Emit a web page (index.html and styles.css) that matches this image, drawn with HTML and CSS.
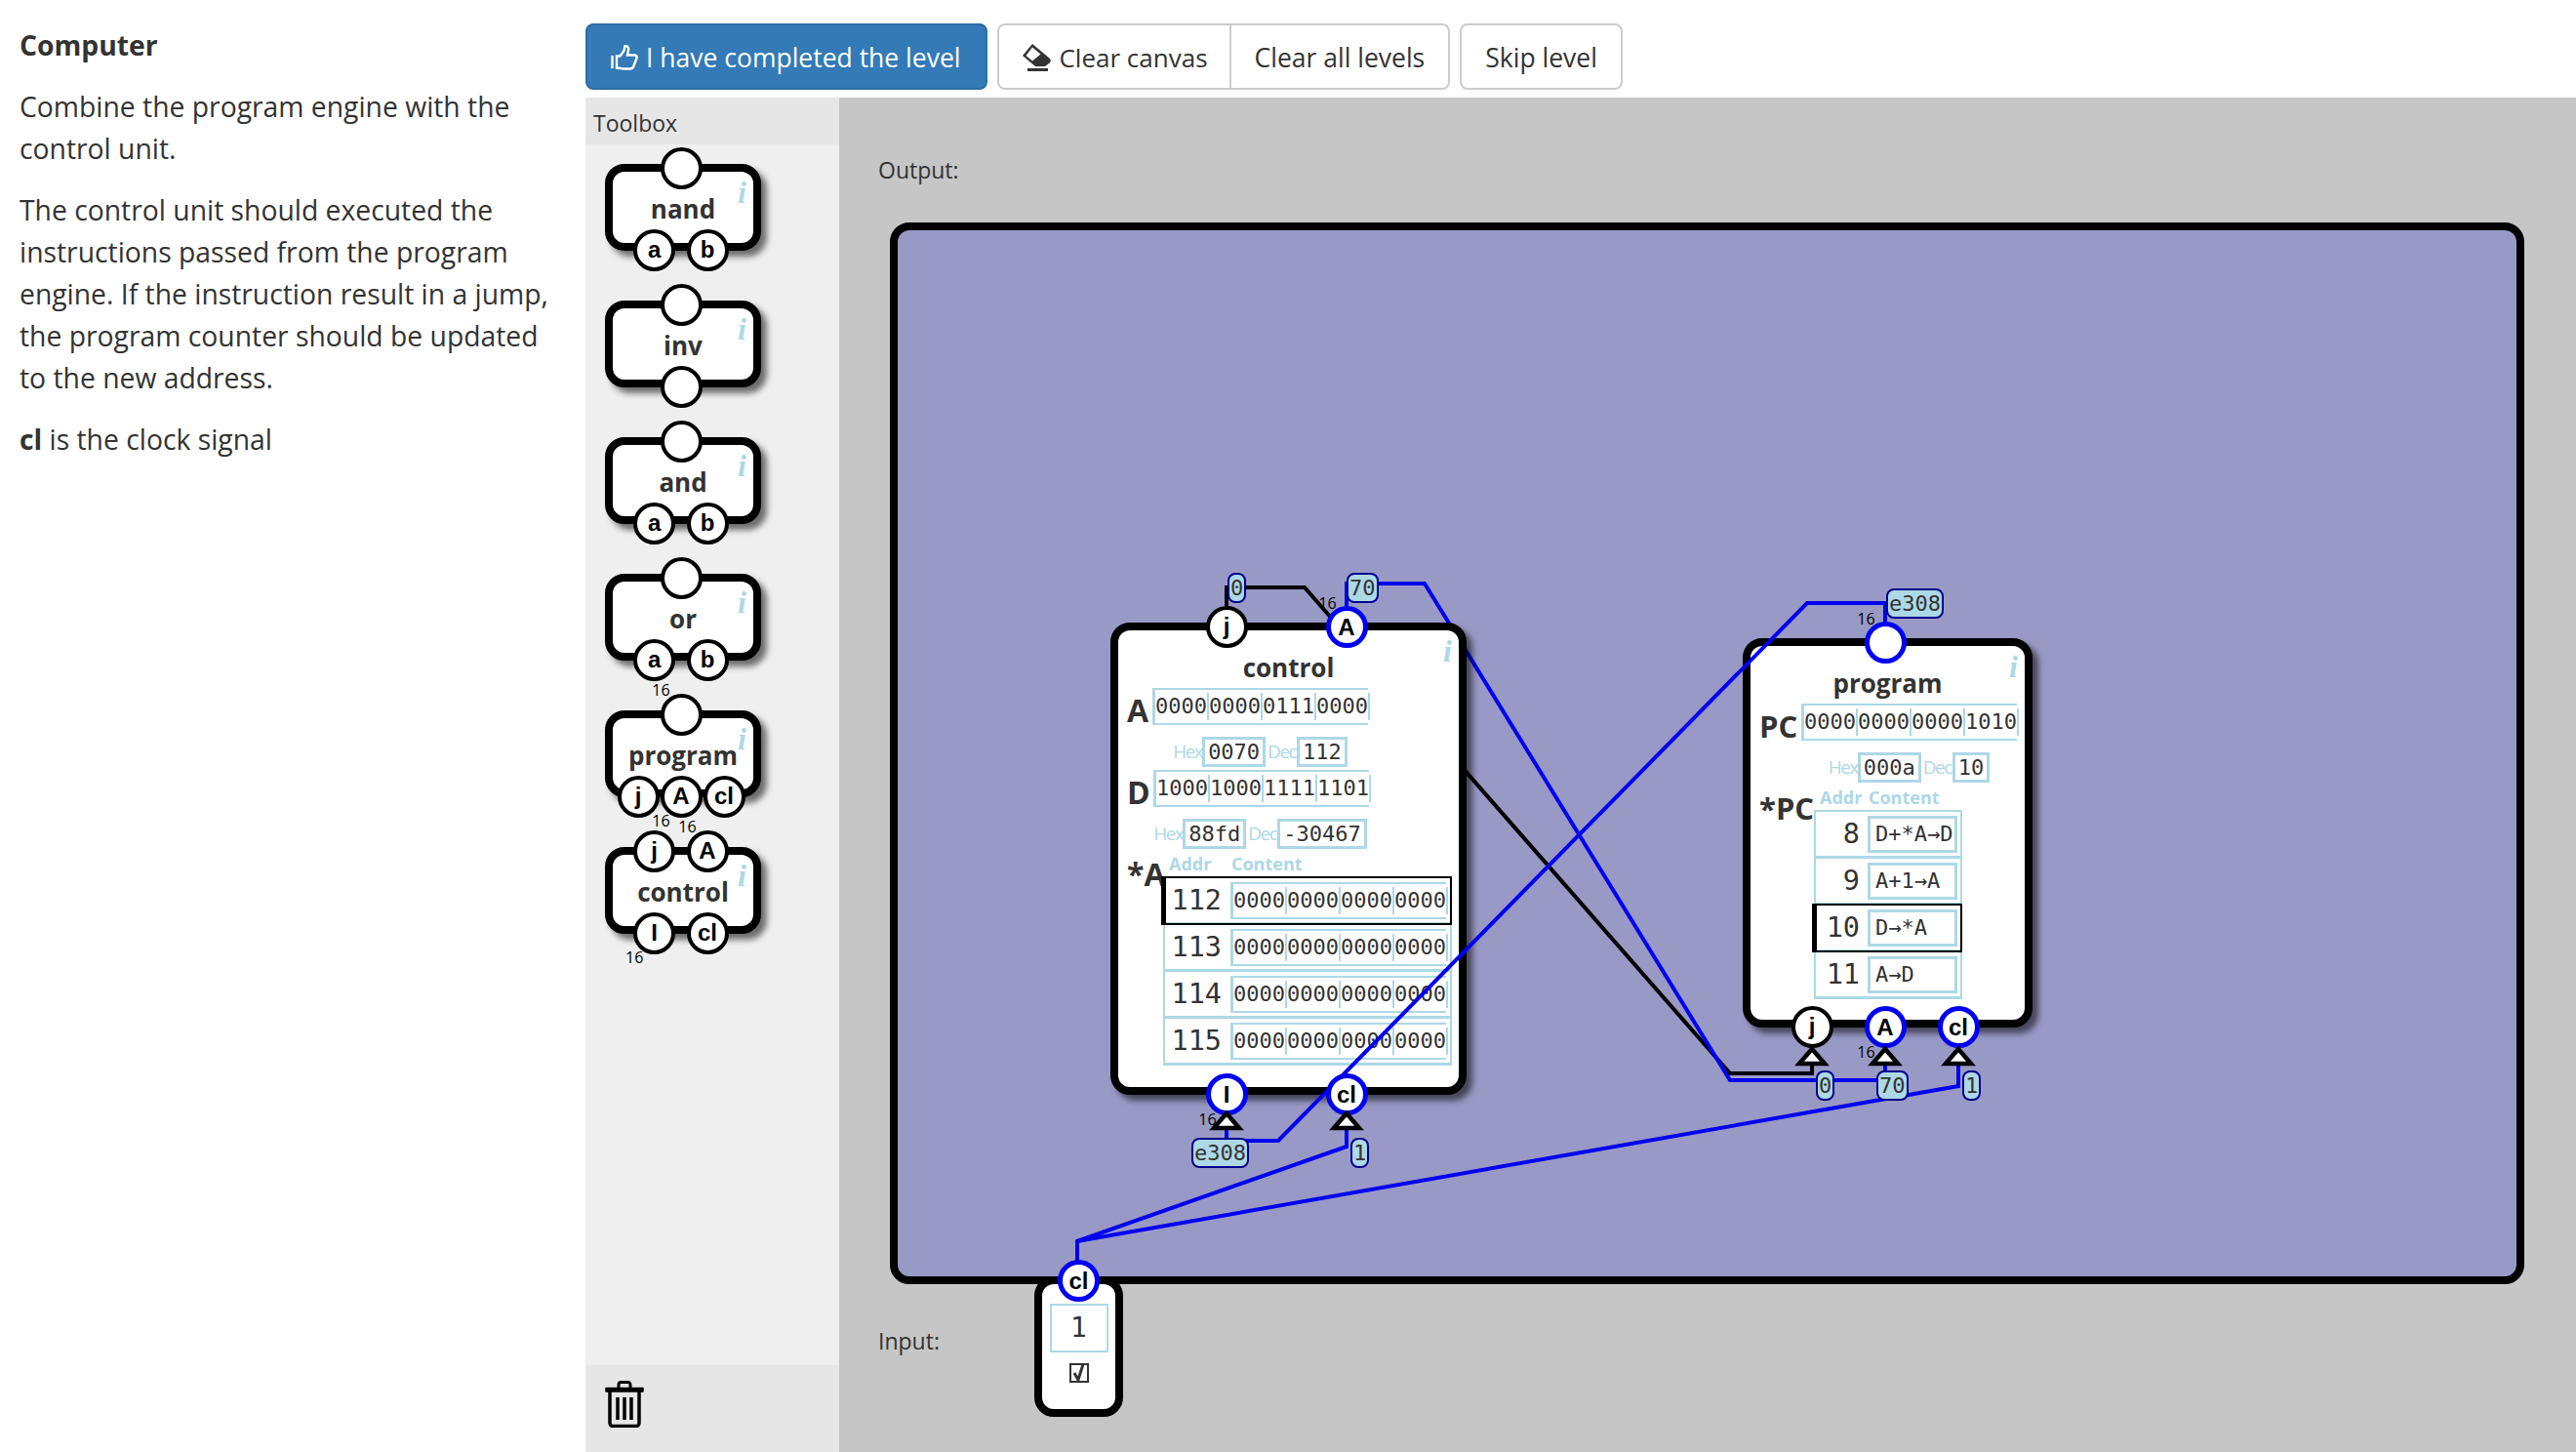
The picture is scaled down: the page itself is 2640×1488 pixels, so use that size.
FILE: index.html
```html
<!DOCTYPE html>
<html lang="en">
<head>
    <meta charset="UTF-8">
    <title>Computer</title>
    <link rel="stylesheet" href="styles.css">
</head>
<body>

    <!-- Level text -->
    <div class="sidebar">
        <h3>Computer</h3>
        <p>Combine the program engine with the control unit.</p>
        <p>The control unit should executed the instructions passed from the program engine. If the instruction result in a jump, the program counter should be updated to the new address.</p>
        <p><b>cl</b> is the clock signal</p>
    </div>

    <div class="main">
        <div class="toolbar">
            <button class="btn btn-primary">
                <svg class="btn-icon" width="28" height="27" viewBox="0 0 28 27" fill="none" stroke="#fff" stroke-width="2.4"><path d="M1.5 11v13"/><path d="M6 11.5h3.5l4-5.5 1-5c3 0 4 2 3.5 4.5l-1 5h7.5c2 0 2.5 2 1.800 3.500l-3 8c-.5 1.500-1.500 2.500-3.500 2.500h-7c-2 0-3-1-6.800-1z"/></svg>
                I have completed the level
            </button>
            <div class="btn-group">
                <button class="btn btn-canvas">
                    <svg class="btn-icon" width="30" height="28" viewBox="0 0 30 28"><path d="M10 0l18 15q2 3-1 5l-4 3h-10l-13-11z" fill="#333"/><path d="M10 3.500l-6.500 8.500 6.500 5.500 8.500-7z" fill="#fff"/><path d="M5 25h21v3h-21z" fill="#333"/></svg>
                    Clear canvas
                </button>
                <button class="btn">Clear all levels</button>
            </div>
            <button class="btn">Skip level</button>
        </div>

        <div class="workspace">
            <!-- Components that can be dragged to the canvas -->
            <div class="toolbox">
                <div class="toolbox-head">Toolbox</div>
                <div class="toolbox-list">
                    <div class="node tool">
                        <span class="info">i</span>
                        <div class="node-title">nand</div>
                        <span class="conn conn-top t-mid"></span>
                        <span class="conn conn-bottom t-left">a</span>
                        <span class="conn conn-bottom t-right">b</span>
                    </div>
                    <div class="node tool">
                        <span class="info">i</span>
                        <div class="node-title">inv</div>
                        <span class="conn conn-top t-mid"></span>
                        <span class="conn conn-bottom t-mid"></span>
                    </div>
                    <div class="node tool">
                        <span class="info">i</span>
                        <div class="node-title">and</div>
                        <span class="conn conn-top t-mid"></span>
                        <span class="conn conn-bottom t-left">a</span>
                        <span class="conn conn-bottom t-right">b</span>
                    </div>
                    <div class="node tool">
                        <span class="info">i</span>
                        <div class="node-title">or</div>
                        <span class="conn conn-top t-mid"></span>
                        <span class="conn conn-bottom t-left">a</span>
                        <span class="conn conn-bottom t-right">b</span>
                    </div>
                    <div class="node tool">
                        <span class="info">i</span>
                        <div class="node-title">program</div>
                        <span class="conn conn-top t-mid"><span class="bus-width">16</span></span>
                        <span class="conn conn-bottom t-first">j</span>
                        <span class="conn conn-bottom t-mid">A<span class="bus-width">16</span></span>
                        <span class="conn conn-bottom t-last">cl</span>
                    </div>
                    <div class="node tool">
                        <span class="info">i</span>
                        <div class="node-title">control</div>
                        <span class="conn conn-top t-left">j</span>
                        <span class="conn conn-top t-right">A<span class="bus-width">16</span></span>
                        <span class="conn conn-bottom t-left">I<span class="bus-width">16</span></span>
                        <span class="conn conn-bottom t-right">cl</span>
                    </div>
                </div>
                <div class="toolbox-foot">
                    <svg width="40" height="48" viewBox="0 0 40 48"><path d="M14 7V4a2.500 2.500 0 0 1 2.500-2.500h7A2.500 2.500 0 0 1 26 4v3" fill="none" stroke="#000" stroke-width="3"/><path d="M1 7.500h38v3.500h-38z" fill="#000" stroke="#000" stroke-width="1.500" stroke-linejoin="round"/><path d="M5 11v32.500a3 3 0 0 0 3 3h24a3 3 0 0 0 3-3V11" fill="none" stroke="#000" stroke-width="3.500"/><path d="M13 17v23M20 17v23M27 17v23" stroke="#000" stroke-width="3.500"/></svg>
                </div>
            </div>

            <!-- Wires use page coordinates through the viewBox -->
            <div class="stage">
                <div class="stage-label">Output:</div>
                <div class="canvas"></div>
                <div class="stage-label stage-label-input">Input:</div>

                <svg class="wires" viewBox="860 100 1780 1388">
                    <path class="wire" d="M1257 622V602H1337L1773 1100H1857V1080"/>
                    <path class="wire on" d="M1380 622V598H1460L1773 1107H1932V1085"/>
                </svg>

                <div class="node node-control">
                    <span class="info">i</span>
                    <div class="node-title">control</div>
                    <div class="reg"><span class="reg-name">A</span><div class="bits"><span>0000</span><span>0000</span><span>0111</span><span>0000</span></div></div>
                    <div class="conv"><span class="conv-name">Hex</span><span class="conv-val">0070</span><span class="conv-name">Dec</span><span class="conv-val">112</span></div>
                    <div class="reg reg-next"><span class="reg-name name-d">D</span><div class="bits"><span>1000</span><span>1000</span><span>1111</span><span>1101</span></div></div>
                    <div class="conv"><span class="conv-name">Hex</span><span class="conv-val">88fd</span><span class="conv-name">Dec</span><span class="conv-val">-30467</span></div>
                    <div class="mem">
                        <span class="reg-name mem-name">*A</span>
                        <div>
                            <div class="mem-head"><span class="head-addr">Addr</span><span>Content</span></div>
                            <div class="mem-table">
                                <div class="mem-row current"><span class="addr">112</span><div class="bits"><span>0000</span><span>0000</span><span>0000</span><span>0000</span></div></div>
                                <div class="mem-row"><span class="addr">113</span><div class="bits"><span>0000</span><span>0000</span><span>0000</span><span>0000</span></div></div>
                                <div class="mem-row"><span class="addr">114</span><div class="bits"><span>0000</span><span>0000</span><span>0000</span><span>0000</span></div></div>
                                <div class="mem-row"><span class="addr">115</span><div class="bits"><span>0000</span><span>0000</span><span>0000</span><span>0000</span></div></div>
                            </div>
                        </div>
                    </div>
                    <span class="conn conn-top c-first">j</span>
                    <span class="conn conn-top c-second on">A<span class="bus-width">16</span></span>
                    <span class="conn conn-bottom c-first on">I<span class="bus-width">16</span></span>
                    <span class="conn conn-bottom c-second on">cl</span>
                </div>

                <div class="node node-program">
                    <span class="info">i</span>
                    <div class="node-title">program</div>
                    <div class="reg"><span class="reg-name name-pc">PC</span><div class="bits"><span>0000</span><span>0000</span><span>0000</span><span>1010</span></div></div>
                    <div class="conv"><span class="conv-name">Hex</span><span class="conv-val">000a</span><span class="conv-name">Dec</span><span class="conv-val">10</span></div>
                    <div class="mem">
                        <span class="reg-name mem-name name-star-pc">*PC</span>
                        <div>
                            <div class="mem-head"><span class="head-addr">Addr</span><span>Content</span></div>
                            <div class="mem-table">
                                <div class="mem-row"><span class="addr">8</span><div class="instr">D+*A→D</div></div>
                                <div class="mem-row"><span class="addr">9</span><div class="instr">A+1→A</div></div>
                                <div class="mem-row current"><span class="addr">10</span><div class="instr">D→*A</div></div>
                                <div class="mem-row"><span class="addr">11</span><div class="instr">A→D</div></div>
                            </div>
                        </div>
                    </div>
                    <span class="conn conn-top p-mid on"><span class="bus-width">16</span></span>
                    <span class="conn conn-bottom p-first">j</span>
                    <span class="conn conn-bottom p-mid on">A<span class="bus-width">16</span></span>
                    <span class="conn conn-bottom p-last on">cl</span>
                </div>

                <div class="node node-input">
                    <div class="input-val">1</div>
                    <svg class="input-check" width="20" height="20" viewBox="0 0 20 20"><path d="M1 1h18v18h-18z" fill="none" stroke="#333" stroke-width="2"/><path d="M5 10l4 7 5-16" fill="none" stroke="#333" stroke-width="3"/></svg>
                    <span class="conn conn-top i-mid on">cl</span>
                </div>

                <svg class="wires wires-top" viewBox="860 100 1780 1388">
                    <path class="wire on" d="M1932 640V618H1852L1310 1169H1257V1150"/>
                    <path class="wire on" d="M1104 1295V1272L1380 1175V1150"/>
                    <path class="wire on" d="M1104 1272L2007 1113V1085"/>
                </svg>

                <svg class="wires wires-marks" viewBox="860 100 1780 1388">
                    <path class="pin" d="M1257 1141L1270 1156H1244z"/>
                    <path class="pin" d="M1380 1141L1393 1156H1367z"/>
                    <path class="pin" d="M1857 1075L1870 1090H1844z"/>
                    <path class="pin" d="M1932 1075L1945 1090H1919z"/>
                    <path class="pin" d="M2007 1075L2020 1090H1994z"/>
                </svg>

                <span class="value v-j">0</span>
                <span class="value v-a">70</span>
                <span class="value v-i">e308</span>
                <span class="value v-cl">1</span>
                <span class="value v-pc">e308</span>
                <span class="value v-pj">0</span>
                <span class="value v-pa">70</span>
                <span class="value v-pcl">1</span>
            </div>
        </div>
    </div>

</body>
</html>
```

FILE: styles.css
```css
body {
    margin: 0;
    height: 1488px;
    overflow: hidden;
    display: flex;
    font-family: "Open Sans", sans-serif;
    font-size: 28.3px;
    line-height: 43px;
    color: #333;
    background-color: #fff;
}

.sidebar {
    width: 600px;
    flex: none;
    box-sizing: border-box;
    padding: 25px 0 0 20px;
}

.sidebar h3 {
    margin: 0 0 20px;
    font-size: 28.3px;
    font-weight: bold;
}

.sidebar p {
    margin: 0 0 20px;
    width: 560px;
}

.main {
    flex: 1;
    display: flex;
    flex-direction: column;
    min-width: 0;
}

.toolbar {
    height: 100px;
    box-sizing: border-box;
    padding-top: 24px;
    display: flex;
    gap: 10px;
}

.btn {
    height: 68px;
    padding: 2px 24px 0;
    font-family: inherit;
    font-size: 26.5px;
    color: #333;
    background-color: #fff;
    border: 2px solid #ccc;
    border-radius: 8px;
    display: flex;
    align-items: center;
    gap: 8px;
}

.btn-primary {
    padding-right: 26px;
    color: #fff;
    background-color: #337ab7;
    border-color: #2e6da4;
}

.btn-canvas {
    padding-right: 22px;
    font-size: 26px;
    gap: 7px;
}

.btn-icon {
    flex: none;
}

.btn-group {
    display: flex;
}

.btn-group .btn:first-child {
    border-radius: 8px 0 0 8px;
}

.btn-group .btn:last-child {
    border-radius: 0 8px 8px 0;
    margin-left: -2px;
}

.workspace {
    flex: 1;
    display: flex;
    min-height: 0;
}

.toolbox {
    width: 260px;
    flex: none;
    display: flex;
    flex-direction: column;
    background-color: #efefef;
}

.toolbox-head {
    height: 48px;
    box-sizing: border-box;
    padding-left: 8px;
    font-size: 23px;
    line-height: 52px;
    background-color: #e6e6e6;
}

.toolbox-list {
    flex: 1;
    padding: 20px 0 0 20px;
}

.toolbox-foot {
    height: 89px;
    box-sizing: border-box;
    padding: 16px 20px 0;
    background-color: #e6e6e6;
}

.stage {
    flex: 1;
    position: relative;
    isolation: isolate;
    box-sizing: border-box;
    padding: 57px 53px 0 40px;
    background-color: #c6c6c6;
}

.stage-label {
    height: 34px;
    margin-bottom: 37px;
    font-size: 23px;
    line-height: 34px;
}

.stage-label-input {
    margin: 41px 0 0;
}

.canvas {
    height: 1088px;
    margin-left: 12px;
    box-sizing: border-box;
    background-color: #9999c6;
    border: 8px solid #000;
    border-radius: 20px;
}

.wires {
    position: absolute;
    left: 0;
    top: 0;
    width: 1780px;
    height: 1388px;
    pointer-events: none;
}

.wires-top {
    z-index: 2;
}

.wires-marks {
    z-index: 4;
}

.wire {
    fill: none;
    stroke: #000;
    stroke-width: 4;
}

.wire.on {
    stroke: #0000f0;
}

.pin {
    fill: #fff;
    stroke: #000;
    stroke-width: 4.5;
}

/* Nodes */
.node {
    box-sizing: border-box;
    background-color: #fff;
    border: 8px solid #000;
    border-radius: 20px;
    box-shadow: 6px 6px 6px rgba(0, 0, 0, 0.55);
}

.tool {
    position: relative;
    width: 160px;
    height: 89px;
    margin-bottom: 51px;
}

.node-title {
    height: 40px;
    font-size: 26px;
    font-weight: bold;
    line-height: 39px;
    text-align: center;
}

.tool .node-title {
    margin-top: 19px;
}

.node-control,
.node-program,
.node-input {
    position: absolute;
}

.node-control {
    left: 278px;
    top: 538px;
    width: 365px;
    height: 484px;
    padding: 19px 0 0 9px;
}

.node-program {
    left: 926px;
    top: 554px;
    width: 297px;
    height: 399px;
    padding: 19px 0 0 9px;
}

.node-control .node-title,
.node-program .node-title {
    margin-left: -9px;
}

.node-input {
    left: 200px;
    top: 1208px;
    width: 91px;
    height: 144px;
    padding-top: 20px;
    display: flex;
    flex-direction: column;
    align-items: center;
    box-shadow: none;
}

.info {
    position: absolute;
    right: 7px;
    top: 3px;
    font-family: "Liberation Serif", serif;
    font-size: 32px;
    font-style: italic;
    font-weight: bold;
    line-height: 36px;
    color: #add8e6;
}

/* Connectors */
.conn {
    position: absolute;
    z-index: 3;
    width: 43px;
    height: 43px;
    box-sizing: border-box;
    margin-left: -21.5px;
    background-color: #fff;
    border: 4px solid #000;
    border-radius: 50%;
    font-family: "Liberation Sans", sans-serif;
    font-size: 24px;
    font-weight: bold;
    line-height: 34px;
    text-align: center;
    color: #000;
}

.conn.on {
    border: 5px solid #0000f0;
    line-height: 33px;
}

.conn-top {
    top: -25.5px;
}

.conn-bottom {
    bottom: -28.5px;
}

.t-left { left: 42.7px; }
.t-mid { left: 70px; }
.t-right { left: 97px; }
.t-first { left: 26px; }
.t-last { left: 114px; }

.c-first { left: 111px; }
.c-second { left: 234px; }

.p-first { left: 63px; }
.p-mid { left: 138px; }
.p-last { left: 213px; }

.i-mid { left: 37.5px; }

.bus-width {
    position: absolute;
    left: -15px;
    width: 24px;
    font-family: "Open Sans", sans-serif;
    font-size: 16px;
    font-weight: normal;
    line-height: 20px;
    color: #000;
}

.conn-top .bus-width {
    top: -17.5px;
}

.conn-bottom .bus-width {
    top: 32.5px;
}

/* Registers */
.reg {
    display: flex;
    height: 38px;
}

.reg-next {
    margin-top: 3px;
}

.reg-name {
    width: 26px;
    flex: none;
    margin-top: 4px;
    font-size: 32px;
    font-weight: bold;
    line-height: 38px;
}

.name-d {
    width: 27px;
}

.name-pc {
    width: 43px;
    font-size: 31px;
}

.bits {
    width: 221px;
    height: 38px;
    flex: none;
    box-sizing: border-box;
    padding: 3px 0;
    display: flex;
    border: solid #add8e6;
    border-width: 2px 0 2px 3px;
    font-family: "DejaVu Sans Mono", monospace;
    font-size: 22px;
    line-height: 28px;
}

.bits span {
    width: 55px;
    box-sizing: border-box;
    border-right: 2px solid #add8e6;
}

.conv {
    width: 221px;
    height: 31px;
    margin: 12px 0 0 26px;
    display: flex;
    justify-content: center;
}

.node-program .conv {
    margin-left: 43px;
}

.conv-name {
    width: 30px;
    font-size: 19px;
    letter-spacing: -1.5px;
    line-height: 31px;
    white-space: nowrap;
    color: #add8e6;
}

.conv-name + .conv-val + .conv-name {
    margin-left: 2px;
}

.conv-val {
    box-sizing: border-box;
    padding: 0 3px;
    border: 3px solid #add8e6;
    font-family: "DejaVu Sans Mono", monospace;
    font-size: 22px;
    line-height: 25px;
}

/* Memory */
.mem {
    display: flex;
    margin-top: 8px;
}

.mem-name {
    width: 37px;
    margin-top: -2px;
    line-height: 40px;
}

.name-star-pc {
    width: 56px;
    font-size: 31px;
}

.mem-head {
    height: 20px;
    padding-left: 6px;
    font-size: 18px;
    font-weight: bold;
    line-height: 15px;
    color: #add8e6;
}

.head-addr {
    display: inline-block;
    width: 64px;
}

.node-program .head-addr {
    width: 50px;
}

.mem-table {
    width: 296px;
    box-sizing: border-box;
    border: solid #add8e6;
    border-width: 2px 2px 0;
}

.node-program .mem-table {
    width: 152px;
}

.mem-row {
    position: relative;
    height: 48px;
    box-sizing: border-box;
    border-bottom: 3px solid #add8e6;
    display: flex;
    align-items: center;
}

.mem-row.current::after {
    content: "";
    position: absolute;
    left: -4px;
    right: -2px;
    top: -2px;
    bottom: -3px;
    border: 2px solid #000;
    border-left-width: 5px;
}

.addr {
    width: 58px;
    margin-right: 9px;
    flex: none;
    font-family: "DejaVu Sans Mono", monospace;
    font-size: 28.5px;
    text-align: right;
}

.node-program .addr {
    width: 45px;
    margin-right: 8px;
}

.instr {
    width: 92px;
    height: 38px;
    box-sizing: border-box;
    padding-left: 5px;
    border: 3px solid #add8e6;
    font-family: "DejaVu Sans Mono", monospace;
    font-size: 22px;
    line-height: 32px;
    white-space: nowrap;
}

/* Input */
.input-val {
    width: 60px;
    height: 50px;
    box-sizing: border-box;
    border: 2px solid #add8e6;
    font-family: "DejaVu Sans Mono", monospace;
    font-size: 28px;
    line-height: 46px;
    text-align: center;
}

.input-check {
    margin-top: 11px;
}

/* Values shown on wires */
.value {
    position: absolute;
    z-index: 4;
    height: 31px;
    box-sizing: border-box;
    padding: 0 1px;
    background-color: #add8e6;
    border: 2px solid #00008b;
    border-radius: 8px;
    font-family: "DejaVu Sans Mono", monospace;
    font-size: 22px;
    line-height: 27px;
}

.v-j { left: 398px; top: 487px; }
.v-a { left: 520px; top: 487px; }
.v-i { left: 361px; top: 1066px; }
.v-cl { left: 524px; top: 1066px; }
.v-pc { left: 1073px; top: 503px; }
.v-pj { left: 1001px; top: 997px; }
.v-pa { left: 1063px; top: 997px; }
.v-pcl { left: 1151px; top: 997px; }
```
